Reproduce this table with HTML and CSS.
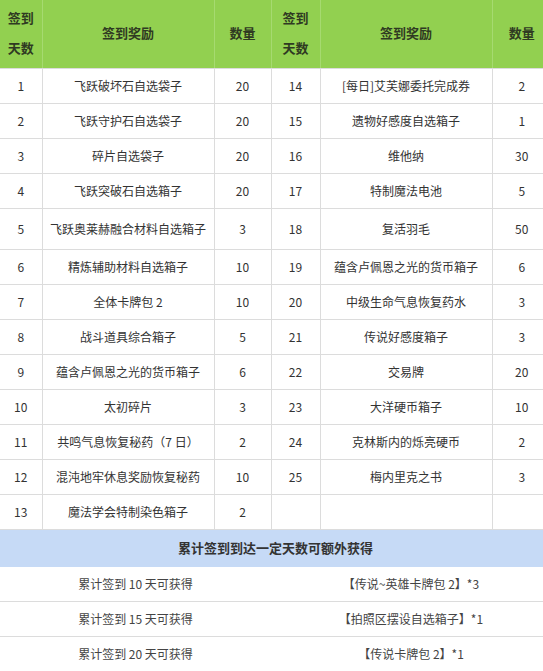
FILE: index.html
```html
<!DOCTYPE html>
<html lang="zh">
<head>
<meta charset="utf-8">
<link rel="stylesheet" href="styles.css">
</head>
<body>
<table class="rewards">
  <colgroup>
    <col class="c-day"><col class="c-name"><col class="c-qty">
    <col class="c-day2"><col class="c-name"><col class="c-qty2">
  </colgroup>
  <thead>
    <tr class="head">
      <th>签到<br>天数</th><th>签到奖励</th><th>数量</th>
      <th>签到<br>天数</th><th>签到奖励</th><th>数量</th>
    </tr>
  </thead>
  <tbody>
    <tr><td>1</td><td>飞跃破坏石自选袋子</td><td>20</td><td>14</td><td>[每日]艾芙娜委托完成券</td><td>2</td></tr>
    <tr><td>2</td><td>飞跃守护石自选袋子</td><td>20</td><td>15</td><td>遗物好感度自选箱子</td><td>1</td></tr>
    <tr><td>3</td><td>碎片自选袋子</td><td>20</td><td>16</td><td>维他纳</td><td>30</td></tr>
    <tr><td>4</td><td>飞跃突破石自选箱子</td><td>20</td><td>17</td><td>特制魔法电池</td><td>5</td></tr>
    <tr class="tall"><td>5</td><td>飞跃奥莱赫融合材料自选箱子</td><td>3</td><td>18</td><td>复活羽毛</td><td>50</td></tr>
    <tr><td>6</td><td>精炼辅助材料自选箱子</td><td>10</td><td>19</td><td>蕴含卢佩恩之光的货币箱子</td><td>6</td></tr>
    <tr><td>7</td><td>全体卡牌包 2</td><td>10</td><td>20</td><td>中级生命气息恢复药水</td><td>3</td></tr>
    <tr><td>8</td><td>战斗道具综合箱子</td><td>5</td><td>21</td><td>传说好感度箱子</td><td>3</td></tr>
    <tr><td>9</td><td>蕴含卢佩恩之光的货币箱子</td><td>6</td><td>22</td><td>交易牌</td><td>20</td></tr>
    <tr><td>10</td><td>太初碎片</td><td>3</td><td>23</td><td>大洋硬币箱子</td><td>10</td></tr>
    <tr><td>11</td><td>共鸣气息恢复秘药（7 日）</td><td>2</td><td>24</td><td>克林斯内的烁亮硬币</td><td>2</td></tr>
    <tr><td>12</td><td>混沌地牢休息奖励恢复秘药</td><td>10</td><td>25</td><td>梅内里克之书</td><td>3</td></tr>
    <tr><td>13</td><td>魔法学会特制染色箱子</td><td>2</td><td></td><td></td><td></td></tr>
    <tr class="section"><td colspan="6">累计签到到达一定天数可额外获得</td></tr>
    <tr class="extra"><td colspan="3">累计签到 10 天可获得</td><td colspan="3">【传说~英雄卡牌包 2】*3</td></tr>
    <tr class="extra"><td colspan="3">累计签到 15 天可获得</td><td colspan="3">【拍照区摆设自选箱子】*1</td></tr>
    <tr class="extra"><td colspan="3">累计签到 20 天可获得</td><td colspan="3">【传说卡牌包 2】*1</td></tr>
  </tbody>
</table>
</body>
</html>
```

FILE: styles.css
```css
html, body {
  margin: 0;
  padding: 0;
  background: #ffffff;
}
body {
  font-family: "Noto Sans CJK SC", "Noto Sans", sans-serif;
  font-size: 12px;
  color: #333333;
}
.rewards {
  width: 543px;
  border-collapse: collapse;
  table-layout: fixed;
}
.c-day { width: 42px; }
.c-name { width: 172px; }
.c-qty { width: 57px; }
.c-day2 { width: 49px; }
.c-qty2 { width: 59px; }
.rewards th, .rewards td {
  border: 1px solid #dcdcdc;
  text-align: center;
  vertical-align: middle;
  padding: 0 2px 2px;
  white-space: nowrap;
}
.rewards tr:first-child th { border-top: none; }
.rewards tr > :first-child { border-left: none; }
.rewards tr > :last-child { border-right: none; }
.head th {
  background: #92d050;
  border-color: #a6da70;
  border-bottom-color: #dcdcdc;
  height: 66px;
  font-size: 13px;
  font-weight: bold;
  line-height: 30px;
  color: #2f3a22;
}
.rewards tbody tr { height: 35px; }
.rewards tbody tr.tall { height: 41px; }
.section td {
  background: #c6daf6;
  font-size: 13px;
  font-weight: bold;
  color: #333333;
  border-color: #c6daf6;
}
.rewards tbody tr.section { height: 37px; }
.extra td {
  border-left: none;
  border-right: none;
  color: #444444;
}
```
